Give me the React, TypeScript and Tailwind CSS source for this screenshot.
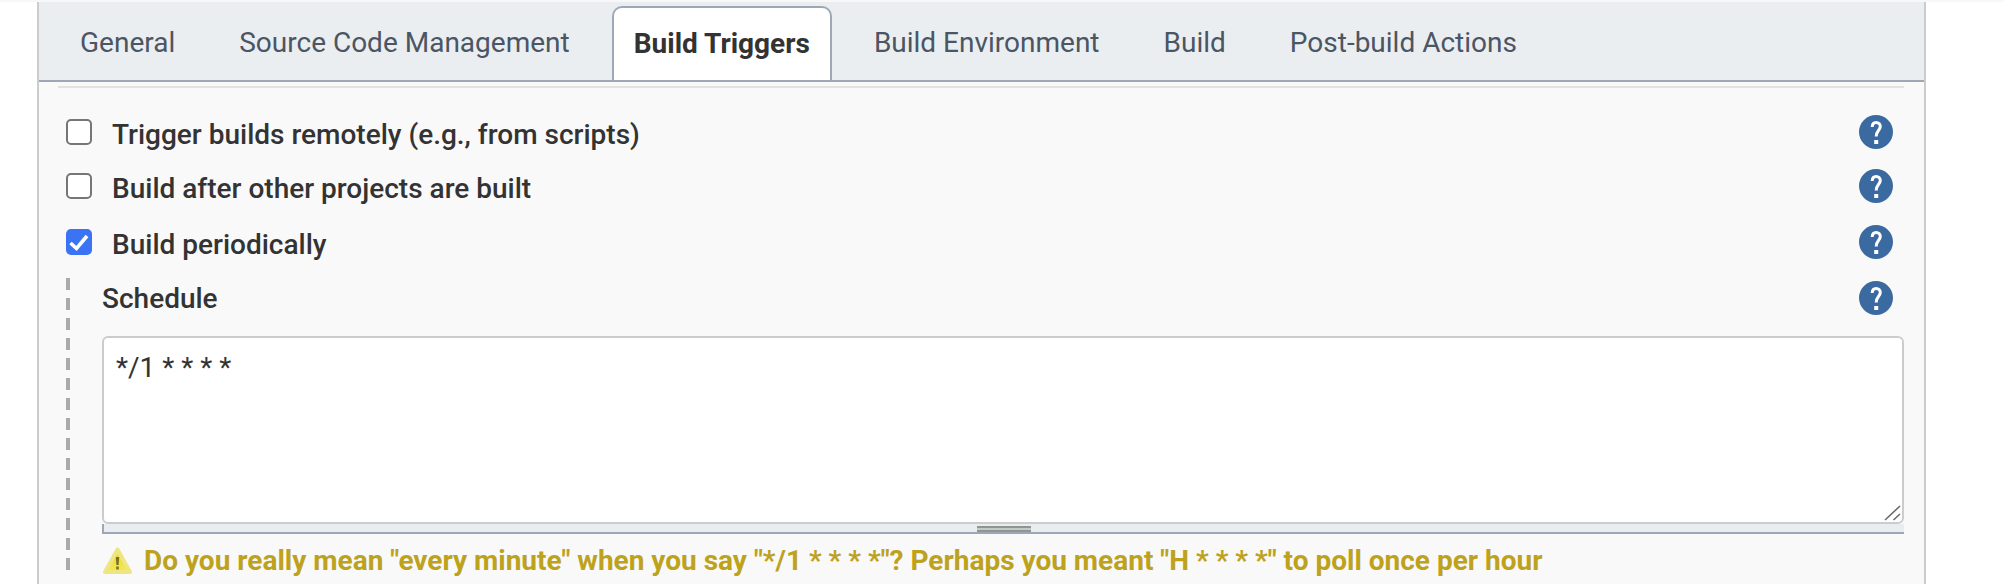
const tabs = ['General', 'Source Code Management', 'Build Triggers', 'Build Environment', 'Build', 'Post-build Actions']

const HelpIcon = () => (
  <svg className="h-[34px] w-[34px] shrink-0" viewBox="0 0 34 34">
    <circle cx="17" cy="17" r="17" fill="#3a6aa0" />
    <path
      d="M13.2 12 C13.2 9 15 7.4 17.2 7.4 C19.5 7.4 21.3 9.2 21.3 11.5 C21.3 15.2 17.2 15.5 17.2 21.5"
      stroke="#fff"
      strokeWidth="3"
      fill="none"
    />
    <rect x="15.2" y="25" width="4" height="4" fill="#fff" />
  </svg>
)

const Row = ({ label, checked, className }: { label: string; checked?: boolean; className: string }) => (
  <div className={`flex h-[34px] items-center ${className}`}>
    {checked ? (
      <svg className="h-[26px] w-[26px] shrink-0" viewBox="0 0 26 26">
        <rect width="26" height="26" rx="5" fill="#3b73f5" />
        <path d="M4.5 14 L10.5 19.5 L21 7" stroke="#fff" strokeWidth="3.6" fill="none" />
      </svg>
    ) : (
      <div className="h-[26px] w-[26px] shrink-0 rounded-[5px] border-2 border-[#767676] bg-white" />
    )}
    <div className="ml-[20px] mt-[6px] grow text-[28px] font-medium leading-[34px] text-[#333]">{label}</div>
    <HelpIcon />
  </div>
)

export default function App() {
  return (
    <div className="h-[584px] overflow-hidden bg-white font-['Roboto',sans-serif]">
      <div className="h-[2px] bg-[#f8f8f8]" />
      <div className="ml-[37px] h-[582px] w-[1889px] border-x-2 border-[#ccc] bg-[#f9f9f9]">
        <div className="flex h-[80px] items-end gap-[20px] border-b-2 border-[#9da8b4] bg-[#eaeef1] pl-[19px]">
          {tabs.map((tab) =>
            tab === 'Build Triggers' ? (
              <div
                key={tab}
                className="flex h-[74px] items-center rounded-t-[10px] border-x-2 border-t-2 border-[#9da8b4] bg-white px-[20px] text-[28px] font-bold text-[#333]"
              >
                {tab}
              </div>
            ) : (
              <div key={tab} className="flex h-[74px] items-center px-[22px] text-[28px] text-[#4b5563]">
                {tab}
              </div>
            ),
          )}
        </div>
        <div className="ml-[19px] mr-[20px] mt-[4px] h-[2px] bg-[#e2e2e2]" />
        <div className="pl-[27px] pr-[31px]">
          <Row label="Trigger builds remotely (e.g., from scripts)" className="mt-[27px]" />
          <Row label="Build after other projects are built" className="mt-[20px]" />
          <Row label="Build periodically" checked className="mt-[22px]" />
        </div>
        <div className="relative pl-[63px] pr-[20px]">
          <div className="absolute bottom-0 left-[27px] top-[19px] w-[4px] bg-[repeating-linear-gradient(to_bottom,#aaa_0,#aaa_12px,transparent_12px,transparent_20px)]" />
          <div className="flex items-center pr-[11px] pt-[22px]">
            <div className="grow translate-y-[1px] text-[28px] font-medium leading-[34px] text-[#333]">Schedule</div>
            <HelpIcon />
          </div>
          <div className="relative mt-[21px]">
            <textarea
              defaultValue="*/1 * * * *"
              className="block h-[188px] w-full resize-none rounded-[6px] border-2 border-[#ccc] bg-white px-[12px] py-[12px] text-[28px] leading-[36px] text-[#333] outline-none"
            />
            <svg className="absolute bottom-[3px] right-[2px] h-[18px] w-[18px]" viewBox="0 0 18 18">
              <path d="M1 17 L16 3 M9.5 17 L16 11" stroke="#666" strokeWidth="1.5" fill="none" />
            </svg>
          </div>
          <div className="flex h-[10px] justify-center border-b-2 border-l-2 border-[#9da8b4] bg-[#e9edf0]">
            <div className="mt-[2px] h-[6px] w-[54px] border-y-2 border-[#8f9692] bg-[#c6c9c7]" />
          </div>
          <div className="mt-[12px] flex items-center">
            <svg className="ml-[1px] h-[28px] w-[29px] shrink-0" viewBox="0 0 29 28">
              <defs>
                <linearGradient id="warn" x1="0" y1="0" x2="0" y2="1">
                  <stop offset="0" stopColor="#e6d53a" />
                  <stop offset="1" stopColor="#f6ea4e" />
                </linearGradient>
              </defs>
              <path
                d="M14.5 2.5 L27 25 L2 25 Z"
                fill="url(#warn)"
                stroke="#efe581"
                strokeWidth="4"
                strokeLinejoin="round"
              />
              <path d="M12.8 10 L16.2 10 L15.6 18 L13.4 18 Z" fill="#7a7128" />
              <rect x="13.2" y="19.5" width="2.6" height="3" fill="#7a7128" />
            </svg>
            <div className="ml-[12px] whitespace-nowrap text-[28px] font-bold leading-[30px] text-[#bda21e]">
              Do you really mean "every minute" when you say "*/1 * * * *"? Perhaps you meant "H * * * *" to poll once per hour
            </div>
          </div>
        </div>
      </div>
    </div>
  )
}
